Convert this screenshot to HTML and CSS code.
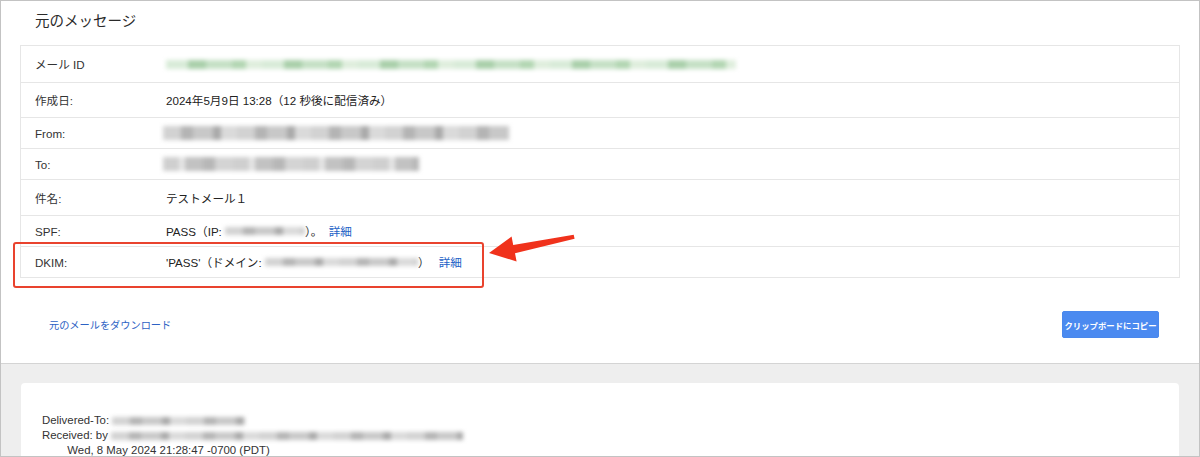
FILE: index.html
```html
<!DOCTYPE html>
<html lang="ja">
<head>
<meta charset="utf-8">
<title>元のメッセージ</title>
<link rel="stylesheet" href="styles.css">
</head>
<body>
<div class="frame">
  <section class="top">
    <h1 class="title">元のメッセージ</h1>
    <div class="table">
      <div class="row tall first">
        <div class="label">メール ID</div>
        <div class="value"><span class="blur green" style="width:570px"></span></div>
      </div>
      <div class="row mid">
        <div class="label">作成日:</div>
        <div class="value">2024年5月9日 13:28（12 秒後に配信済み）</div>
      </div>
      <div class="row">
        <div class="label">From:</div>
        <div class="value"><span class="blur grey shift" style="width:346px"></span></div>
      </div>
      <div class="row">
        <div class="label">To:</div>
        <div class="value"><span class="blur grey light shift" style="width:256px"></span></div>
      </div>
      <div class="row tall">
        <div class="label">件名:</div>
        <div class="value">テストメール１</div>
      </div>
      <div class="row">
        <div class="label">SPF:</div>
        <div class="value">PASS（IP: <span class="blur grey small" style="width:80px"></span>）。 <a class="link" href="#">詳細</a></div>
      </div>
      <div class="row">
        <div class="label">DKIM:</div>
        <div class="value">'PASS'（ドメイン: <span class="blur grey small" style="width:153px"></span>） <a class="link gap" href="#">詳細</a></div>
      </div>
    </div>
    <div class="actions">
      <a class="download" href="#">元のメールをダウンロード</a>
      <button class="copy" type="button">クリップボードにコピー</button>
    </div>
  </section>
  <section class="bottom">
    <div class="card">
      <pre class="raw">Delivered-To: <span class="blur grey small" style="width:133px"></span>
Received: by <span class="blur grey small" style="width:352px"></span>
        Wed, 8 May 2024 21:28:47 -0700 (PDT)</pre>
    </div>
  </section>

  <div class="highlight"></div>
  <svg class="arrow" width="100" height="40" viewBox="486 230 100 40" aria-hidden="true">
    <polygon points="489,253 511.6,236.6 513.2,245 573.7,234.8 574.6,238.8 515,253.2 516.6,261.5" fill="#f0321c"/>
  </svg>
</div>
</body>
</html>
```

FILE: styles.css
```css
* { box-sizing: border-box; }

html, body {
  margin: 0;
  padding: 0;
  background: #ffffff;
}

body {
  font-family: "Liberation Sans", "Noto Sans CJK JP", sans-serif;
  color: #222222;
}

.frame {
  position: relative;
  width: 1200px;
  height: 457px;
  border: 1px solid #c3c3c3;
  overflow: hidden;
  display: flex;
  flex-direction: column;
}

.top {
  height: 363px;
  flex: none;
  border-bottom: 1px solid #d4d4d4;
  background: #ffffff;
}

.title {
  margin: 0;
  height: 44px;
  padding: 9px 0 0 34px;
  font-family: "Noto Sans CJK JP", sans-serif;
  font-size: 14.5px;
  font-weight: 400;
  line-height: 20px;
  color: #2a2a2a;
}

.table {
  margin: 0 19px 0 19px;
  border: 1px solid #e6e6e6;
}

.row {
  display: flex;
  align-items: center;
  height: 31px;
  border-top: 1px solid #e6e6e6;
  font-size: 11.6px;
}

.row.first { border-top: none; height: 36px; }
.row.tall { height: 36px; }
.row.mid { height: 35px; }

.label {
  width: 145px;
  flex: none;
  padding-left: 14px;
  color: #333333;
}

.value {
  display: flex;
  align-items: center;
  white-space: pre;
  color: #222222;
}

.link {
  color: #2261c6;
  text-decoration: none;
  margin-left: 3px;
}

.link.gap { margin-left: 6px; }

.blur {
  display: inline-block;
  height: 11px;
  filter: blur(2px);
  vertical-align: middle;
}

.blur.small { height: 8px; }

.blur.shift { margin-left: -3px; height: 14px; }

.blur.green {
  height: 9px;
  background: repeating-linear-gradient(90deg,
    #d8ebd8 0 22px, #a9cfaa 22px 40px, #c5e0c5 40px 66px, #b2d6b2 66px 80px, #dfeedd 80px 96px);
}

.blur.grey {
  background: repeating-linear-gradient(90deg,
    #d2d2d2 0 18px, #b4b4b4 18px 30px, #c8c8c8 30px 50px, #a9a9a9 50px 58px, #dadada 58px 74px);
}

.blur.grey.light {
  background: repeating-linear-gradient(90deg,
    #cfcfcf 0 16px, #e6e6e6 16px 22px, #c2c2c2 22px 40px, #b7b7b7 40px 52px, #d4d4d4 52px 70px);
}

.actions {
  display: flex;
  justify-content: space-between;
  align-items: center;
  margin-top: 33px;
  padding: 0 40px 0 48px;
}

.download {
  font-family: "Noto Sans CJK JP", sans-serif;
  font-size: 10.2px;
  color: #2d62c4;
  text-decoration: none;
}

.copy {
  width: 97px;
  height: 27px;
  border: 1px solid #4a88ec;
  border-radius: 2px;
  background: #4b8af0;
  color: #ffffff;
  font-family: "Noto Sans CJK JP", sans-serif;
  font-size: 8.4px;
  font-weight: 700;
  padding: 0;
  white-space: nowrap;
}

.bottom {
  flex: 1;
  background: #eeeeee;
  padding: 19px 20px 0 20px;
}

.card {
  height: 100%;
  background: #ffffff;
  border-radius: 4px 4px 0 0;
  padding: 30px 0 0 21px;
}

.raw {
  margin: 0;
  font-family: "Liberation Sans", "Noto Sans CJK JP", sans-serif;
  font-size: 11.4px;
  line-height: 15px;
  color: #333333;
}

.highlight {
  position: absolute;
  left: 12px;
  top: 241px;
  width: 471px;
  height: 46px;
  border: 2px solid #e9432e;
  border-radius: 3px;
}

.arrow {
  position: absolute;
  left: 485px;
  top: 229px;
}
```
